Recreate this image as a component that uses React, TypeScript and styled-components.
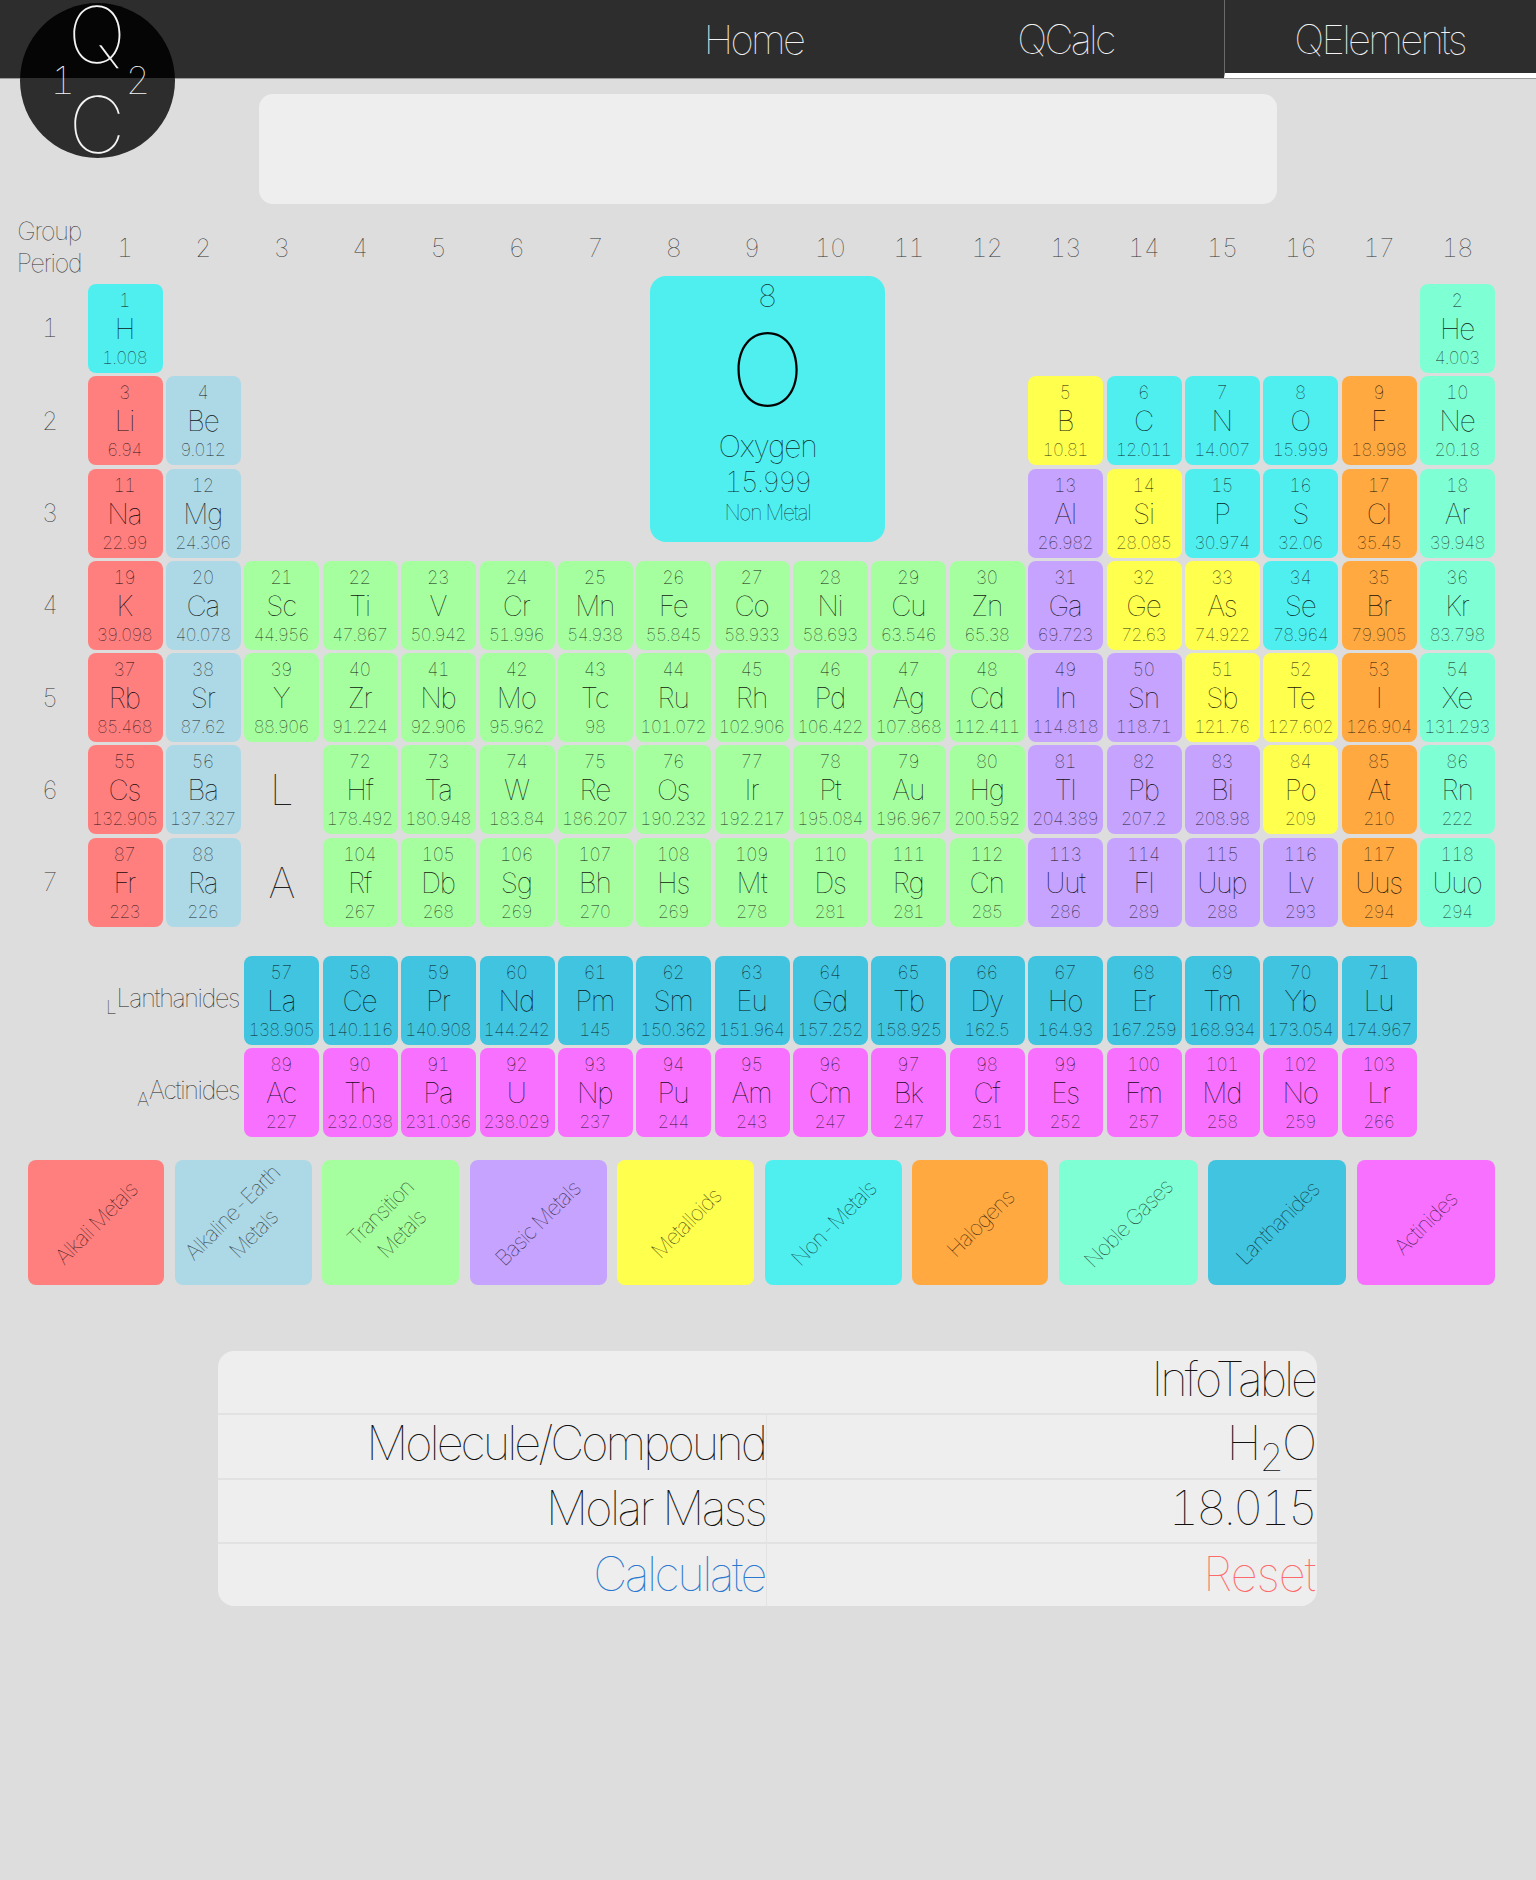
import React from "react";
import styled, { createGlobalStyle } from "styled-components";

const GlobalStyle = createGlobalStyle`
  html, body { margin: 0; padding: 0; background: #dddddd; }
  body { font-family: Inter, "Liberation Sans", sans-serif; font-weight: 100; font-variant-numeric: tabular-nums; min-height: 1880px; }
`;

type Kind = "a" | "e" | "t" | "b" | "m" | "n" | "h" | "g" | "l" | "c";

const COLORS: Record<Kind, string> = {
  a: "#ff7f7f",
  e: "#add8e6",
  t: "#a5ff9f",
  b: "#c5a3ff",
  m: "#ffff4d",
  n: "#50efef",
  h: "#ffa940",
  g: "#7fffd4",
  l: "#40c4df",
  c: "#f870ff",
};

const DATA = `
1 1 1 H 1.008 n|1 18 2 He 4.003 g
2 1 3 Li 6.94 a|2 2 4 Be 9.012 e|2 13 5 B 10.81 m|2 14 6 C 12.011 n|2 15 7 N 14.007 n|2 16 8 O 15.999 n|2 17 9 F 18.998 h|2 18 10 Ne 20.18 g
3 1 11 Na 22.99 a|3 2 12 Mg 24.306 e|3 13 13 Al 26.982 b|3 14 14 Si 28.085 m|3 15 15 P 30.974 n|3 16 16 S 32.06 n|3 17 17 Cl 35.45 h|3 18 18 Ar 39.948 g
4 1 19 K 39.098 a|4 2 20 Ca 40.078 e|4 3 21 Sc 44.956 t|4 4 22 Ti 47.867 t|4 5 23 V 50.942 t|4 6 24 Cr 51.996 t|4 7 25 Mn 54.938 t|4 8 26 Fe 55.845 t|4 9 27 Co 58.933 t|4 10 28 Ni 58.693 t|4 11 29 Cu 63.546 t|4 12 30 Zn 65.38 t|4 13 31 Ga 69.723 b|4 14 32 Ge 72.63 m|4 15 33 As 74.922 m|4 16 34 Se 78.964 n|4 17 35 Br 79.905 h|4 18 36 Kr 83.798 g
5 1 37 Rb 85.468 a|5 2 38 Sr 87.62 e|5 3 39 Y 88.906 t|5 4 40 Zr 91.224 t|5 5 41 Nb 92.906 t|5 6 42 Mo 95.962 t|5 7 43 Tc 98 t|5 8 44 Ru 101.072 t|5 9 45 Rh 102.906 t|5 10 46 Pd 106.422 t|5 11 47 Ag 107.868 t|5 12 48 Cd 112.411 t|5 13 49 In 114.818 b|5 14 50 Sn 118.71 b|5 15 51 Sb 121.76 m|5 16 52 Te 127.602 m|5 17 53 I 126.904 h|5 18 54 Xe 131.293 g
6 1 55 Cs 132.905 a|6 2 56 Ba 137.327 e|6 4 72 Hf 178.492 t|6 5 73 Ta 180.948 t|6 6 74 W 183.84 t|6 7 75 Re 186.207 t|6 8 76 Os 190.232 t|6 9 77 Ir 192.217 t|6 10 78 Pt 195.084 t|6 11 79 Au 196.967 t|6 12 80 Hg 200.592 t|6 13 81 Tl 204.389 b|6 14 82 Pb 207.2 b|6 15 83 Bi 208.98 b|6 16 84 Po 209 m|6 17 85 At 210 h|6 18 86 Rn 222 g
7 1 87 Fr 223 a|7 2 88 Ra 226 e|7 4 104 Rf 267 t|7 5 105 Db 268 t|7 6 106 Sg 269 t|7 7 107 Bh 270 t|7 8 108 Hs 269 t|7 9 109 Mt 278 t|7 10 110 Ds 281 t|7 11 111 Rg 281 t|7 12 112 Cn 285 t|7 13 113 Uut 286 b|7 14 114 Fl 289 b|7 15 115 Uup 288 b|7 16 116 Lv 293 b|7 17 117 Uus 294 h|7 18 118 Uuo 294 g
9 3 57 La 138.905 l|9 4 58 Ce 140.116 l|9 5 59 Pr 140.908 l|9 6 60 Nd 144.242 l|9 7 61 Pm 145 l|9 8 62 Sm 150.362 l|9 9 63 Eu 151.964 l|9 10 64 Gd 157.252 l|9 11 65 Tb 158.925 l|9 12 66 Dy 162.5 l|9 13 67 Ho 164.93 l|9 14 68 Er 167.259 l|9 15 69 Tm 168.934 l|9 16 70 Yb 173.054 l|9 17 71 Lu 174.967 l
10 3 89 Ac 227 c|10 4 90 Th 232.038 c|10 5 91 Pa 231.036 c|10 6 92 U 238.029 c|10 7 93 Np 237 c|10 8 94 Pu 244 c|10 9 95 Am 243 c|10 10 96 Cm 247 c|10 11 97 Bk 247 c|10 12 98 Cf 251 c|10 13 99 Es 252 c|10 14 100 Fm 257 c|10 15 101 Md 258 c|10 16 102 No 259 c|10 17 103 Lr 266 c
`;

const ELEMENTS = DATA.trim()
  .split(/\n|\|/)
  .map((s) => {
    const [row, col, num, sym, mass, kind] = s.trim().split(" ");
    return { row: +row, col: +col, num, sym, mass, kind: kind as Kind };
  });

const LEGEND: { kind: Kind; lines: string[] }[] = [
  { kind: "a", lines: ["Alkali Metals"] },
  { kind: "e", lines: ["Alkaline-Earth", "Metals"] },
  { kind: "t", lines: ["Transition", "Metals"] },
  { kind: "b", lines: ["Basic Metals"] },
  { kind: "m", lines: ["Metalloids"] },
  { kind: "n", lines: ["Non-Metals"] },
  { kind: "h", lines: ["Halogens"] },
  { kind: "g", lines: ["Noble Gases"] },
  { kind: "l", lines: ["Lanthanides"] },
  { kind: "c", lines: ["Actinides"] },
];

const Page = styled.div`
  position: relative;
  width: 1536px;
  min-height: 1880px;
  background: #dddddd;
  overflow: hidden;
`;

const Header = styled.header`
  height: 78px;
  background: #2d2d2d;
  border-bottom: 1px solid #9a9a9a;
  display: flex;
  justify-content: flex-end;
`;

const NavItem = styled.a<{ $active?: boolean }>`
  width: 312px;
  height: 78px;
  box-sizing: border-box;
  display: flex;
  justify-content: center;
  align-items: center;
  padding-top: ${(p) => (p.$active ? "5px" : "0")};
  padding-right: ${(p) => (p.$active ? "2px" : "5px")};
  font-size: 40px;
  letter-spacing: -2.7px;
  color: #f2f2f2;
  border-left: ${(p) => (p.$active ? "1px solid #6a6a6a" : "0")};
  border-bottom: ${(p) => (p.$active ? "5px solid #ffffff" : "0")};
`;

const Logo = styled.div`
  position: absolute;
  left: 20px;
  top: 3px;
  width: 155px;
  height: 155px;
  border-radius: 50%;
  background: linear-gradient(#050505 0, #050505 75px, #2d2d2d 75px);
  color: #f4f4f4;
`;

const LogoGlyph = styled.span<{ $x: number; $y: number; $size: number }>`
  position: absolute;
  left: ${(p) => p.$x}px;
  top: ${(p) => p.$y}px;
  transform: translate(-50%, -50%);
  font-size: ${(p) => p.$size}px;
  line-height: 0.72;
`;

const SearchPanel = styled.div`
  margin: 15px 0 0 259px;
  width: 1018px;
  height: 110px;
  background: #eeeeee;
  border-radius: 14px;
`;

const TableGrid = styled.div`
  position: relative;
  margin-top: 11px;
  padding-left: 14px;
  display: grid;
  grid-template-columns: 70.2px repeat(18, 75px);
  grid-template-rows: 65.7px repeat(7, 89px) 22.6px 89px 89px;
  column-gap: 3.4px;
  row-gap: 3.3px;
`;

const Corner = styled.div`
  grid-column: 1;
  grid-row: 1;
  font-size: 25px;
  line-height: 32px;
  letter-spacing: -1.2px;
  color: #333;
  text-align: center;
  white-space: nowrap;
`;

const GroupNum = styled.div<{ $col: number }>`
  grid-column: ${(p) => p.$col + 1};
  grid-row: 1;
  display: flex;
  align-items: center;
  justify-content: center;
  padding: 1px 1px 0 0;
  font-size: 25px;
  color: #333;
  letter-spacing: -0.8px;
`;

const PeriodNum = styled.div<{ $row: number }>`
  grid-column: 1;
  grid-row: ${(p) => p.$row + 1};
  display: flex;
  align-items: center;
  justify-content: center;
  padding-left: 2px;
  font-size: 25px;
  color: #333;
`;

const Cell = styled.div<{ $col: number; $row: number; $kind: Kind }>`
  grid-column: ${(p) => p.$col + 1};
  grid-row: ${(p) => p.$row + 1};
  background: ${(p) => COLORS[p.$kind]};
  border-radius: 8px;
  padding: 7px 1.5px 0 0;
  display: flex;
  flex-direction: column;
  align-items: center;
  color: #000;
  min-width: 0;
`;

const CellNum = styled.div`
  font-size: 18px;
  line-height: 20px;
  letter-spacing: -0.7px;
  opacity: 0.92;
`;

const CellSym = styled.div`
  font-size: 28px;
  line-height: 36px;
  letter-spacing: -1.2px;
  opacity: 0.9;
`;

const CellMass = styled.div`
  margin-top: 1px;
  font-size: 17.5px;
  line-height: 20px;
  letter-spacing: -1px;
  white-space: nowrap;
  opacity: 0.85;
`;

const SeriesMark = styled.div<{ $row: number }>`
  grid-column: 4;
  grid-row: ${(p) => p.$row + 1};
  display: flex;
  align-items: center;
  justify-content: center;
  font-size: 42px;
  color: #222;
`;

const SeriesLabel = styled.div<{ $row: number }>`
  grid-column: 1 / 4;
  grid-row: ${(p) => p.$row + 1};
  display: flex;
  align-items: center;
  justify-content: flex-end;
  padding: 0 2px 5px 0;
  font-size: 25px;
  letter-spacing: -1.3px;
  color: #222;
  white-space: nowrap;
  sub {
    font-size: 19px;
    line-height: 0;
    position: relative;
    top: 10px;
    vertical-align: baseline;
    letter-spacing: 0;
  }
`;

const BigCard = styled.div`
  position: absolute;
  left: 650px;
  top: 276px;
  width: 235px;
  height: 266px;
  box-sizing: border-box;
  background: ${COLORS.n};
  border-radius: 16px;
  display: flex;
  flex-direction: column;
  align-items: center;
  padding-top: 1px;
  color: #000;
`;

const BigNum = styled.div`
  font-size: 31px;
  line-height: 38px;
  opacity: 0.8;
`;

const BigSym = styled.div`
  margin-top: -2px;
  font-size: 100px;
  line-height: 114px;
  font-weight: 100;
`;

const BigName = styled.div`
  margin-top: 0;
  font-size: 30px;
  line-height: 38px;
  letter-spacing: -1.2px;
  opacity: 0.85;
`;

const BigMass = styled.div`
  font-size: 28px;
  line-height: 34px;
  letter-spacing: -2px;
  opacity: 0.85;
`;

const BigKind = styled.div`
  margin-top: 1px;
  font-size: 21px;
  line-height: 26px;
  letter-spacing: -1.3px;
  opacity: 0.8;
`;

const Legend = styled.div`
  margin: 23px 0 0 28px;
  display: grid;
  grid-template-columns: 136px 137px 137px 137px 137px 137px 136px 139px 138px 138px;
  column-gap: 10.5px;
`;

const LegendCell = styled.div<{ $kind: Kind }>`
  height: 125px;
  border-radius: 8px;
  background: ${(p) => COLORS[p.$kind]};
  display: flex;
  align-items: center;
  justify-content: center;
  min-width: 0;
`;

const LegendText = styled.div`
  flex: none;
  transform: rotate(-45deg);
  text-align: center;
  font-size: 21.5px;
  line-height: 30px;
  letter-spacing: -1px;
  color: #000;
  opacity: 0.8;
  white-space: nowrap;
`;

const InfoTable = styled.div`
  margin: 66px 0 0 218px;
  width: 1099px;
  height: 255px;
  background: #eeeeee;
  border-radius: 16px;
  overflow: hidden;
  display: grid;
  grid-template-columns: 549px 1fr;
  grid-template-rows: 62px repeat(3, 1fr);
`;

const InfoCell = styled.div<{
  $span?: boolean;
  $color?: string;
  $top?: boolean;
  $divider?: boolean;
  $spacing?: number;
  $action?: boolean;
}>`
  grid-column: ${(p) => (p.$span ? "1 / 3" : "auto")};
  box-sizing: border-box;
  display: flex;
  align-items: center;
  justify-content: flex-end;
  padding: 0 ${(p) => (p.$divider ? "1px" : "2px")} ${(p) => (p.$action ? "4px" : "7px")} 0;
  font-size: 47px;
  letter-spacing: ${(p) => p.$spacing ?? -3}px;
  line-height: 1;
  color: ${(p) => p.$color || "#111"};
  border-top: ${(p) => (p.$top ? "2px solid #e2e2e2" : "0")};
  border-right: ${(p) => (p.$divider ? "1px solid #e2e2e2" : "0")};
  sub {
    font-size: 38px;
    line-height: 0;
    position: relative;
    top: 14px;
    vertical-align: baseline;
  }
`;

export default function App() {
  const groups = Array.from({ length: 18 }, (_, i) => i + 1);
  const periods = Array.from({ length: 7 }, (_, i) => i + 1);
  return (
    <Page>
      <GlobalStyle />
      <Header>
        <NavItem>Home</NavItem>
        <NavItem>QCalc</NavItem>
        <NavItem $active>QElements</NavItem>
      </Header>
      <Logo>
        <LogoGlyph $x={77} $y={32} $size={78}>Q</LogoGlyph>
        <LogoGlyph $x={43} $y={78} $size={38}>1</LogoGlyph>
        <LogoGlyph $x={118} $y={78} $size={38}>2</LogoGlyph>
        <LogoGlyph $x={77} $y={122} $size={78}>C</LogoGlyph>
      </Logo>
      <SearchPanel />
      <TableGrid>
        <Corner>
          Group
          <br />
          Period
        </Corner>
        {groups.map((g) => (
          <GroupNum key={g} $col={g}>{g}</GroupNum>
        ))}
        {periods.map((p) => (
          <PeriodNum key={p} $row={p}>{p}</PeriodNum>
        ))}
        {ELEMENTS.map((e) => (
          <Cell key={e.num} $col={e.col} $row={e.row} $kind={e.kind}>
            <CellNum>{e.num}</CellNum>
            <CellSym>{e.sym}</CellSym>
            <CellMass>{e.mass}</CellMass>
          </Cell>
        ))}
        <SeriesMark $row={6}>L</SeriesMark>
        <SeriesMark $row={7}>A</SeriesMark>
        <SeriesLabel $row={9}>
          <sub>L</sub>Lanthanides
        </SeriesLabel>
        <SeriesLabel $row={10}>
          <sub>A</sub>Actinides
        </SeriesLabel>
      </TableGrid>
      <BigCard>
        <BigNum>8</BigNum>
        <BigSym>O</BigSym>
        <BigName>Oxygen</BigName>
        <BigMass>15.999</BigMass>
        <BigKind>Non Metal</BigKind>
      </BigCard>
      <Legend>
        {LEGEND.map((l) => (
          <LegendCell key={l.kind} $kind={l.kind}>
            <LegendText>
              {l.lines.map((t) => (
                <div key={t}>{t}</div>
              ))}
            </LegendText>
          </LegendCell>
        ))}
      </Legend>
      <InfoTable>
        <InfoCell $span>InfoTable</InfoCell>
        <InfoCell $top $divider>Molecule/Compound</InfoCell>
        <InfoCell $top $spacing={-2}>
          H<sub>2</sub>O
        </InfoCell>
        <InfoCell $top $divider $spacing={-2.6}>Molar Mass</InfoCell>
        <InfoCell $top>18.015</InfoCell>
        <InfoCell $top $divider $action $spacing={-2.5} $color="#2a78cf">Calculate</InfoCell>
        <InfoCell $top $action $spacing={-1} $color="#ff6a6a">Reset</InfoCell>
      </InfoTable>
    </Page>
  );
}
